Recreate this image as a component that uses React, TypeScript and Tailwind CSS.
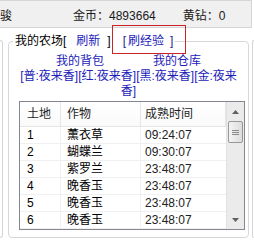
import React from "react";

const rows = [
  ["1", "薰衣草", "09:24:07"],
  ["2", "蝴蝶兰", "09:30:07"],
  ["3", "紫罗兰", "23:48:07"],
  ["4", "晚香玉", "23:48:07"],
  ["5", "晚香玉", "23:48:07"],
  ["6", "晚香玉", "23:48:07"],
];

export default function App() {
  return (
    <div className="relative w-[254px] h-[242px] overflow-hidden bg-white text-[12px] text-black font-[family-name:'Liberation_Sans','Noto_Sans_CJK_SC',sans-serif]">
      {/* top bar */}
      <div className="h-[28px] mr-[2px] border-y border-r border-[#d6d6d6] bg-[#f0f0f0] flex items-center pt-[4px] leading-[14px] text-[#1a1a1a]">
        <span>骏</span>
        <span className="ml-[61px]">金币：4893664</span>
        <span className="ml-[27px]">黄钻：0</span>
      </div>

      <div className="flex items-start">
        {/* left neighbour panel edge */}
        <div className="w-[3px] mt-[12px] h-[198px] border-t border-r border-b border-[#d5d5d5] rounded-r-[4px]" />

        <fieldset className="ml-[5px] mt-[6px] w-[242px] border border-[#d5d9dc] rounded-[4px] pb-[7px]">
          <legend className="ml-[4px] px-[2px] leading-[14px] whitespace-nowrap">
            <span>我的农场[</span>
            <span className="ml-[10px] text-[#1c1cba]">刷新</span>
            <span className="ml-[7px]">]</span>
            <span className="ml-[12px] text-[#1c1c8a]">[</span>
            <span className="ml-[2px] text-[#1c1cba]">刷经验</span>
            <span className="ml-[6px] text-[#1c1c8a]">]</span>
          </legend>

          <div className="pt-[6px] flex flex-col items-center text-[#1c1cba] leading-[15px]">
            <div className="flex gap-[49px]">
              <span>我的背包</span>
              <span>我的仓库</span>
            </div>
            <div className="whitespace-nowrap">[普:夜来香][红:夜来香][黑:夜来香][金:夜来</div>
            <div>香]</div>
          </div>

          {/* list view */}
          <div className="mt-[2px] ml-[10px] w-[226px] h-[129px] border border-[#828790] flex bg-white">
            <div className="flex-1 flex flex-col">
              <div className="h-[25px] grid grid-cols-[41px_80px_1fr] border-b border-[#e5e5e5] bg-gradient-to-b from-white to-[#fafafa] text-[#1e1e1e]">
                <div className="pl-[7px] flex items-center border-r border-[#e5e5e5]">土地</div>
                <div className="pl-[6px] flex items-center border-r border-[#e5e5e5]">作物</div>
                <div className="pl-[4px] flex items-center border-r border-[#e5e5e5]">成熟时间</div>
              </div>
              {rows.map((r) => (
                <div
                  key={r[0]}
                  className="h-[17px] grid grid-cols-[41px_80px_1fr] border-b border-[#f0f0f0] leading-[16px]"
                >
                  <div className="pl-[7px] border-r border-[#f0f0f0]">{r[0]}</div>
                  <div className="pl-[6px] border-r border-[#f0f0f0]">{r[1]}</div>
                  <div className="pl-[4px] text-[#222]">{r[2]}</div>
                </div>
              ))}
            </div>

            {/* scrollbar */}
            <div className="w-[18px] bg-[#ebebeb] border-l border-[#e2e2e2] flex flex-col items-center">
              <div className="h-[19px] w-full flex items-center justify-center">
                <svg width="7" height="4" viewBox="0 0 7 4">
                  <path d="M0 4 L3.5 0 L7 4 Z" fill="#606060" />
                </svg>
              </div>
              <div className="w-[15px] h-[22px] rounded-[2px] border border-[#979797] bg-gradient-to-r from-[#f4f4f4] to-[#dcdcdc] flex flex-col items-center justify-center gap-[1px]">
                <div className="w-[7px] h-[1px] bg-[#8a8a8a]" />
                <div className="w-[7px] h-[1px] bg-[#8a8a8a]" />
                <div className="w-[7px] h-[1px] bg-[#8a8a8a]" />
              </div>
              <div className="flex-1" />
              <div className="h-[19px] w-full flex items-center justify-center">
                <svg width="7" height="4" viewBox="0 0 7 4">
                  <path d="M0 0 L3.5 4 L7 0 Z" fill="#606060" />
                </svg>
              </div>
            </div>
          </div>
        </fieldset>

        {/* right neighbour panel edge */}
        <div className="ml-[3px] w-[2px] mt-[12px] h-[198px] border-t border-l border-b border-[#d5d5d5] rounded-l-[4px]" />
      </div>

      {/* red highlight box */}
      <div className="absolute left-[112px] top-[25px] w-[74px] h-[29px] border border-[#cc2229]" />
    </div>
  );
}
